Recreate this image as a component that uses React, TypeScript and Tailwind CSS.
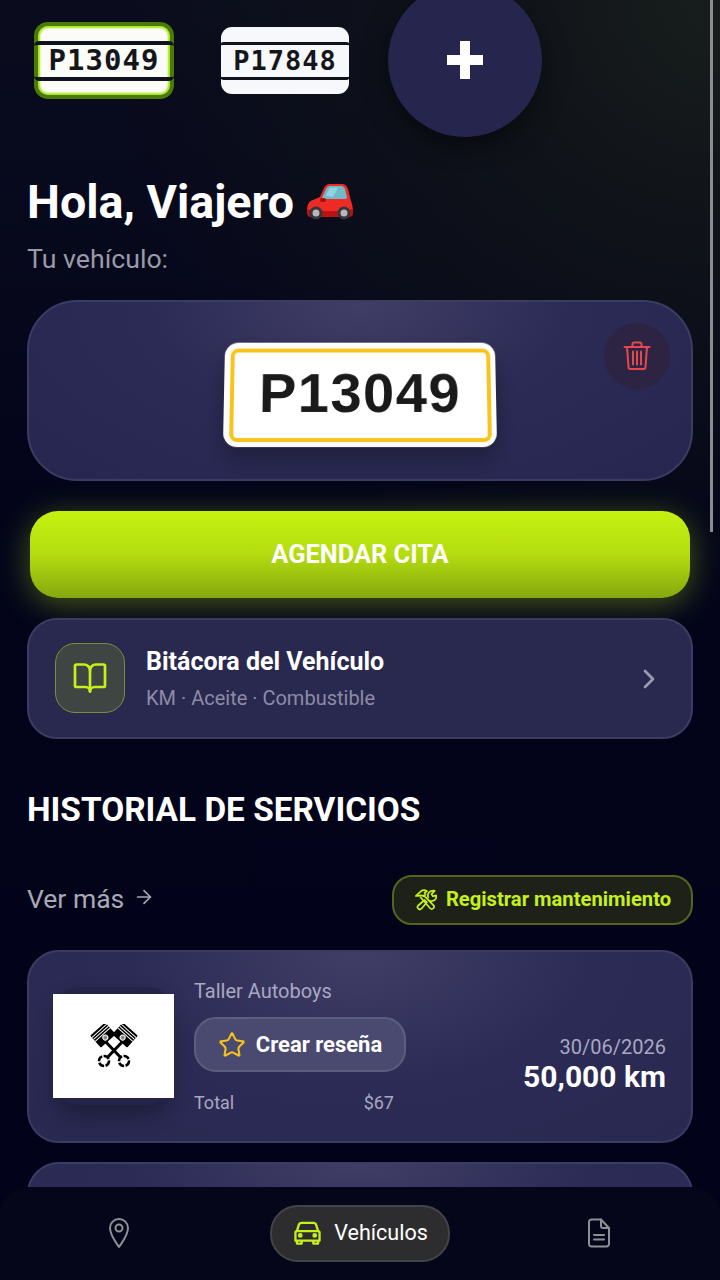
import { BookOpen, ChevronRight, Star, ArrowRight } from "lucide-react";

const CarEmoji = () => (
  <svg width="46" height="36" viewBox="0 0 46 36">
    <path d="M0 26c0-5 2-9 6-10l7-3L17 4c1-2 3-4 6-4h12c3 0 5 2 6 5l3 12c1 3 2 6 2 10 0 3-1 5-4 5H4c-3 0-4-2-4-6z" fill="#ee2a24" />
    <path d="M15 14l4-9c1-2 2-3 4-3h11c2 0 3 1 4 3l2 8c0 1 0 2-2 2H16c-1 0-2 0-1-1z" fill="#6fb9c9" />
    <path d="M19 12l3-7c.5-1 1-1.500 2-1.500h7L26 13z" fill="#93d3df" />
    <path d="M0 25c10 3 36 3 46 0 0 1 0 2 0 3 0 3-1 5-4 5H4c-3 0-4-2-4-6z" fill="#bb1310" />
    <rect x="13" y="14" width="6" height="4" rx="2" fill="#a80f0c" />
    <circle cx="9" cy="29" r="6.500" fill="#36363a" /><circle cx="9" cy="29" r="3.500" fill="#b8b8bc" />
    <circle cx="37" cy="29" r="6.500" fill="#36363a" /><circle cx="37" cy="29" r="3.500" fill="#b8b8bc" />
  </svg>
);

const Trash = () => (
  <svg width="28" height="30" viewBox="0 0 28 30" fill="none" stroke="#e5484f" strokeWidth="2" strokeLinecap="round" strokeLinejoin="round">
    <path d="M1.500 6h25M9.500 6V3a1.500 1.500 0 0 1 1.500-1.500h6A1.500 1.500 0 0 1 18.500 3v3" />
    <path d="M4 6l1.500 20a2 2 0 0 0 2 2h13a2 2 0 0 0 2-2L24 6" />
    <path d="M10 10.500v13M14 10.500v13M18 10.500v13" />
  </svg>
);

const Tools = () => (
  <svg width="24" height="22" viewBox="0 0 26 24" fill="none" stroke="#c6f01a" strokeWidth="1.900" strokeLinecap="round" strokeLinejoin="round">
    <path d="M2 7.500 7.500 2.500c2-1.500 4.500-1.500 6.500 0l-2.500 1.500 1 2-2 2-2-1-5 0.500z" />
    <path d="M7 9l10.500 12c1 1 2.500 1 3.500 0s1-2.500 0-3.500L10.500 7" />
    <path d="M4.500 21.500c1 1 2.500 1 3.500 0l6-7-2.500-2.500-7 6c-1 1-1 2.500 0 3.500z" />
    <path d="M15.500 9.500c-1-2.500 0-5.500 2.500-7 1.500-.8 3-1 4.500-.5L19 5.500l1.500 2.500 3.500-1c.5 2-.5 4.500-2.500 5.500-1.500.8-3 .8-4.500.3" />
  </svg>
);

const Pistons = () => (
  <svg width="50" height="44" viewBox="0 0 50 44">
    <path d="M15 16 35 37M35 16 15 37" stroke="#000" strokeWidth="3" />
    <circle cx="15" cy="37" r="5" fill="#fff" stroke="#000" strokeWidth="2.500" strokeDasharray="6 1.500" />
    <circle cx="35" cy="37" r="5" fill="#fff" stroke="#000" strokeWidth="2.500" strokeDasharray="6 1.500" />
    <g transform="rotate(-42 14 11)">
      <rect x="4" y="3" width="20" height="16" rx="1" fill="#000" />
      <path d="M4 5.500h20M4 8h20M4 10.500h20" stroke="#fff" strokeWidth="1" />
      <circle cx="14" cy="14.500" r="2.500" fill="#888" stroke="#fff" strokeWidth="1" />
    </g>
    <g transform="rotate(42 36 11)">
      <rect x="26" y="3" width="20" height="16" rx="1" fill="#000" />
      <path d="M26 5.500h20M26 8h20M26 10.500h20" stroke="#fff" strokeWidth="1" />
      <circle cx="36" cy="14.500" r="2.500" fill="#888" stroke="#fff" strokeWidth="1" />
    </g>
  </svg>
);

const Pin = () => (
  <svg width="24" height="32" viewBox="0 0 24 32" fill="none" stroke="#8f8f96" strokeWidth="2" strokeLinejoin="round">
    <path d="M12 30C8 24 3 18 3 11a9 9 0 0 1 18 0C21 18 16 24 12 30z" />
    <circle cx="12" cy="11" r="3.500" />
  </svg>
);

const Car = () => (
  <svg width="27" height="24" viewBox="0 0 28 24" fill="none" stroke="#c6f01a" strokeWidth="2.400" strokeLinejoin="round">
    <path d="M3 10 5 3.500C5.500 2 6.500 1.500 8 1.500h12c1.500 0 2.500.5 3 2L25 10" />
    <path d="M1.500 11.500c0-1 .8-1.500 1.500-1.500h22c.8 0 1.500.5 1.500 1.500V20H1.500z" />
    <path d="M3 20v3h5v-3M20 20v3h5v-3" />
    <circle cx="6.500" cy="14.500" r="1.300" fill="#c6f01a" /><circle cx="21.500" cy="14.500" r="1.300" fill="#c6f01a" />
  </svg>
);

const Doc = () => (
  <svg width="24" height="30" viewBox="0 0 24 30" fill="none" stroke="#8f8f96" strokeWidth="2" strokeLinecap="round" strokeLinejoin="round">
    <path d="M14 1.500H4.500a2.500 2.500 0 0 0-2.500 2.500v22a2.500 2.500 0 0 0 2.500 2.500h15a2.500 2.500 0 0 0 2.500-2.500V10z" />
    <path d="M14 1.500V8a2 2 0 0 0 2 2h6" />
    <path d="M7 17h10M7 21.500h10" />
  </svg>
);

const SmallPlate = ({ text, active }: { text: string; active?: boolean }) => (
  <div className={active
    ? "relative flex h-[77px] w-[140px] items-center justify-center rounded-[14px] border-[4px] border-[#4a7a08] bg-[#fbfcf8] shadow-[inset_0_0_2px_2px_#a5e60f]"
    : "relative flex h-[67px] w-[128px] items-center justify-center rounded-[11px] bg-[#f7f8fb]"}>
    <div className={active
      ? "flex h-[40px] w-[140px] shrink-0 items-center justify-center rounded-[5px] border-y-[4px] border-[#11131c] font-['DejaVu_Sans_Mono'] text-[29px] font-bold leading-none tracking-[1px] text-[#15161c]"
      : "flex h-[38px] w-[130px] shrink-0 items-center justify-center rounded-[4px] border-y-[3px] border-[#11131c] font-['DejaVu_Sans_Mono'] text-[27px] font-bold leading-none tracking-[1px] text-[#15161c]"}>
      {text}
    </div>
  </div>
);

export default function App() {
  return (
    <div className="relative h-[1280px] w-[720px] overflow-hidden bg-[radial-gradient(circle_at_100%_0%,rgba(24,29,28,1)_0%,rgba(16,20,24,0.8)_18%,rgba(10,12,30,0)_42%),linear-gradient(180deg,#0a0c1e_0%,#03041a_40%,#02031a_100%)] font-['Roboto',sans-serif] text-white">
      <div className="flex h-[137px] items-start pl-[34px]">
        <div className="mt-[22px]"><SmallPlate text="P13049" active /></div>
        <div className="ml-[47px] mt-[27px]"><SmallPlate text="P17848" /></div>
        <div className="ml-[39px] -mt-[17px] flex h-[154px] w-[154px] items-center justify-center rounded-full bg-[#25254d] shadow-[0_8px_24px_rgba(0,0,0,0.5)]">
          <div className="text-[0px]">
            <svg width="36" height="38" viewBox="0 0 36 38"><path d="M13 0h10v14h13v10H23v14H13V24H0V14h13z" fill="#fff" /></svg>
          </div>
        </div>
      </div>

      <div className="px-[27px]">
        <div className="mt-[39px] flex h-[52px] items-center gap-[13px]">
          <h1 className="text-[46.600px] font-bold leading-none">Hola, Viajero</h1>
          <CarEmoji />
        </div>
        <p className="mt-[13px] h-[36px] text-[26.700px] leading-[36px] text-[#9a9aa6]">Tu vehículo:</p>

        <div className="relative mt-[23px] flex h-[181px] items-center justify-center rounded-[50px] border-2 border-[#3c3c62] bg-[radial-gradient(ellipse_at_50%_0%,#403e66_0%,#2c2b56_45%,#262650_100%)]">
          <div className="mt-[8px] flex h-[105px] w-[272px] items-center justify-center rounded-[14px] bg-white shadow-[0_12px_24px_rgba(0,0,0,0.3)] [transform:perspective(700px)_rotateX(6deg)]">
            <div className="flex h-[94px] w-[261px] items-center justify-center rounded-[8px] border-[4px] border-[#f9c31b] pb-[3px] font-['Liberation_Sans'] text-[56px] font-bold tracking-[1.500px] text-[#1a1a1a]">
              P13049
            </div>
          </div>
          <div className="absolute right-[21px] top-[21px] flex h-[66px] w-[66px] items-center justify-center rounded-full bg-[#2c2442]">
            <Trash />
          </div>
        </div>

        <button className="mx-[3px] mt-[30px] flex h-[87px] w-[660px] items-center justify-center rounded-[28px] bg-[linear-gradient(180deg,#c6f210_0%,#b4dc10_50%,#86a80e_100%)] text-[25.400px] font-bold text-white shadow-[0_6px_32px_rgba(150,190,20,0.45)]">
          AGENDAR CITA
        </button>

        <div className="relative mt-[20px] flex h-[121px] items-center rounded-[30px] border-2 border-[#3c3c62] bg-[#29294f] pl-[26px] pr-[26px]">
          <div className="mb-[1px] flex h-[70px] w-[70px] items-center justify-center rounded-[20px] border border-[#7b8f3a] bg-[#3f4542]">
            <BookOpen size={36} strokeWidth={1.8} color="#c6f01a" />
          </div>
          <div className="ml-[21px] flex-1">
            <div className="text-[25px] font-bold leading-[32px]">Bitácora del Vehículo</div>
            <div className="mt-[6px] text-[20px] leading-[28px] text-[#8d8ba8]">KM · Aceite · Combustible</div>
          </div>
          <ChevronRight size={32} strokeWidth={2} color="#9a9ab0" />
        </div>

        <h2 className="mt-[51px] text-[33.400px] font-bold leading-[40px]">HISTORIAL DE SERVICIOS</h2>

        <div className="mt-[45px] flex h-[50px] items-center justify-between">
          <div className="mb-[2px] flex items-center gap-[9px] text-[26.500px] text-[#a9a9b6]">
            Ver más <ArrowRight size={22} strokeWidth={1.8} className="-mt-[5px]" />
          </div>
          <div className="flex h-[50px] w-[301px] items-center justify-center gap-[8px] rounded-[20px] border-2 border-[#56641e] bg-[#1e2118] pb-[1px] text-[20.200px] font-bold text-[#c6f01a]">
            <Tools />Registrar mantenimiento
          </div>
        </div>

        <div className="relative mt-[25px] flex h-[193px] rounded-[32px] border-2 border-[#3c3c62] bg-[radial-gradient(ellipse_at_50%_0%,#403e66_0%,#2c2b56_50%,#282850_100%)]">
          <div className="relative ml-[24px] mt-[42px] h-[104px] w-[121px]">
            <div className="absolute -top-[7px] left-[2px] h-[118px] w-[117px] rounded-[24px] bg-[#24244a] shadow-[0_10px_20px_rgba(0,0,0,0.3)]" />
            <div className="absolute inset-0 flex items-center justify-center bg-white"><Pistons /></div>
          </div>
          <div className="ml-[20px] w-[200px]">
            <div className="mt-[26px] text-[20px] leading-[26px] text-[#a9a8c0]">Taller Autoboys</div>
            <div className="mt-[13px] flex h-[55px] w-[212px] items-center justify-center gap-[10px] rounded-[22px] border-2 border-[#5e5d7e] bg-[#4a4970] text-[22px] font-bold">
              <Star size={28} strokeWidth={1.8} color="#f5c21b" />Crear reseña
            </div>
            <div className="mt-[18px] flex justify-between text-[18px] leading-[26px] text-[#a9a8c0]">
              <span>Total</span><span>$67</span>
            </div>
          </div>
          <div className="flex-1 pr-[25px] pt-[82px] text-right">
            <div className="text-[20px] leading-[26px] text-[#a9a8c0]">30/06/2026</div>
            <div className="text-[30px] font-bold leading-[34px]">50,000 km</div>
          </div>
        </div>

        <div className="mt-[19px] h-[120px] rounded-t-[32px] border-2 border-[#3c3c62] bg-[radial-gradient(ellipse_at_50%_0%,#403e66_0%,#2c2b56_50%,#282850_100%)]" />
      </div>

      <nav className="absolute inset-x-0 bottom-0 flex h-[93px] items-center rounded-t-[28px] bg-[#05061a] pb-[1px]">
        <div className="flex w-[238px] justify-center"><Pin /></div>
        <div className="ml-[32px] flex h-[57px] w-[180px] items-center justify-center gap-[13px] rounded-[28px] border-2 border-[#444447] bg-[#2d2d2f] pl-[2px] text-[21.500px]">
          <Car />Vehículos
        </div>
        <div className="ml-[137px] flex w-[24px] justify-center"><Doc /></div>
      </nav>

      <div className="absolute right-[7px] top-0 h-[532px] w-[3px] bg-[#8c8c92]" />
    </div>
  );
}
